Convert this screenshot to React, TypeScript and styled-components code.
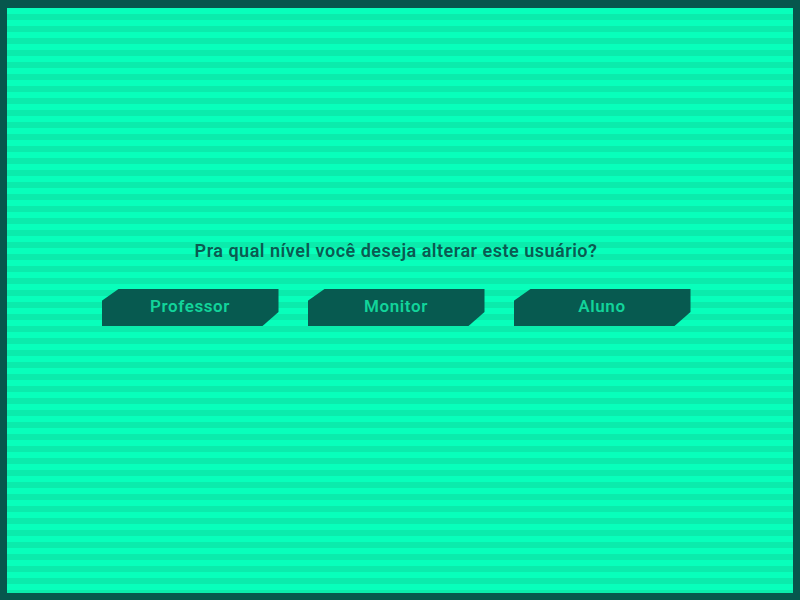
import React from "react";
import styled, { createGlobalStyle } from "styled-components";

const Global = createGlobalStyle`
  html, body { margin: 0; padding: 0; }
  body { font-family: Roboto, "Liberation Sans", sans-serif; }
`;

const Frame = styled.div`
  box-sizing: border-box;
  width: 800px;
  height: 600px;
  border: 7px solid #07574d;
  border-top-width: 8px;
  background: repeating-linear-gradient(
    to bottom,
    #08ffbb 0px,
    #08ffbb 6px,
    #0bebac 6px,
    #0bebac 12px
  );
  display: flex;
  flex-direction: column;
  align-items: center;
  padding: 229px 8px 0 0;
`;

const Question = styled.h2`
  margin: 0;
  font-family: Roboto, "Liberation Sans", sans-serif;
  font-weight: 600;
  font-size: 18px;
  line-height: 28px;
  color: #0b5a51;
  letter-spacing: 0.5px;
`;

const Options = styled.div`
  display: flex;
  gap: 29px;
  margin-top: 24px;
`;

const Option = styled.button`
  width: 177px;
  height: 37px;
  border: none;
  padding: 0 0 3px;
  background: #075a50;
  color: #12d49a;
  font-family: Roboto, "Liberation Sans", sans-serif;
  font-weight: 600;
  font-size: 17px;
  letter-spacing: 0.6px;
  cursor: pointer;
  clip-path: polygon(17px 0, 100% 0, 100% 23px, 161px 100%, 0 100%, 0 12px);
`;

export default function App() {
  return (
    <>
      <Global />
      <Frame>
        <Question>Pra qual nível você deseja alterar este usuário?</Question>
        <Options>
          <Option>Professor</Option>
          <Option>Monitor</Option>
          <Option>Aluno</Option>
        </Options>
      </Frame>
    </>
  );
}
